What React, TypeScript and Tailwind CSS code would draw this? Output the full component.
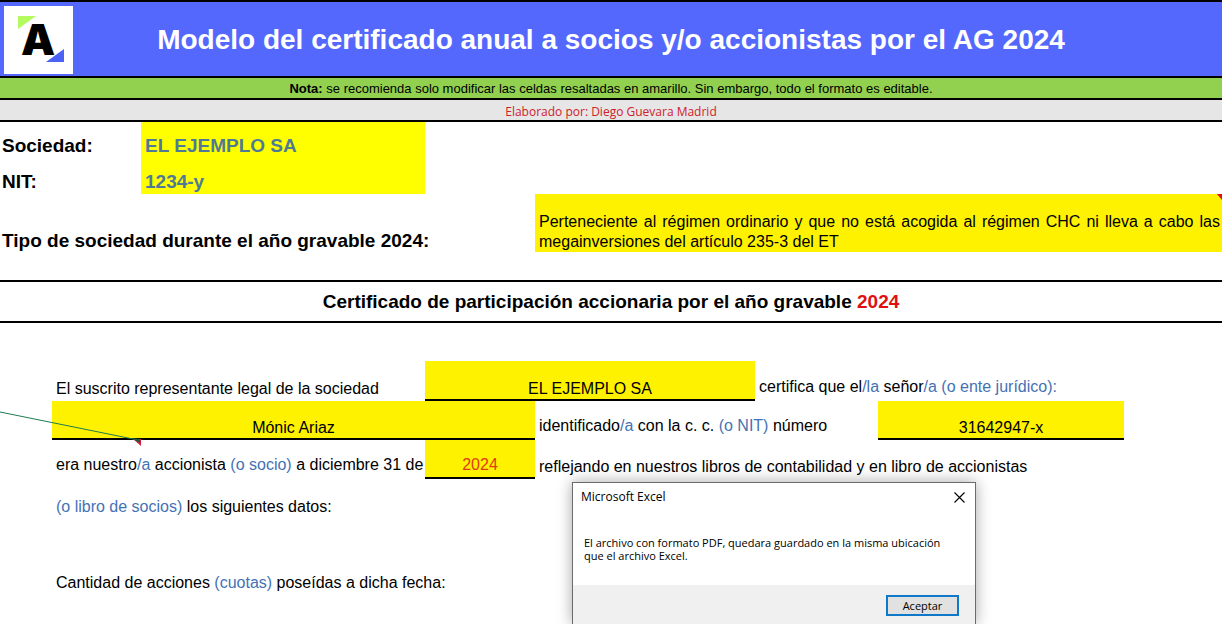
import React from 'react';

interface CellProps {
  className?: string
  children?: React.ReactNode
}

const Alt: React.FC<CellProps> = ({ children }) => (
  <span className="text-[#4472b4]">{children}</span>
);

const Filled: React.FC<CellProps> = ({ className = '', children }) => (
  <div
    className={`flex items-end justify-center bg-[#fff200] border-b-2 border-black ${className}`}
  >
    {children}
  </div>
);

const Logo: React.FC = () => (
  <svg width="69" height="68" viewBox="0 0 69 68" role="img" aria-label="Logo" className="shrink-0 bg-white">
    <path d="M14 10h18L14 23z" fill="#b4fb60" />
    <path d="M60 43v13H42z" fill="#4a63f5" />
    <text
      x="34"
      y="49"
      textAnchor="middle"
      className="font-['Inter',sans-serif] text-[43px] font-black"
      fill="#000"
    >
      A
    </text>
  </svg>
);

const Header: React.FC = () => (
  <header>
    <div className="relative flex items-center h-[78px] px-1 bg-[#5468fd] border-y-2 border-black">
      <div className="absolute left-1 top-1">
        <Logo />
      </div>
      <h1 className="flex-1 pt-0.5 text-center text-[28px] leading-8 font-bold text-white">
        Modelo del certificado anual a socios y/o accionistas por el AG 2024
      </h1>
    </div>
    <p className="h-[22px] pt-px text-center text-[13px] leading-5 bg-[#92d050] border-b-2 border-black">
      <b>Nota:</b> se recomienda solo modificar las celdas resaltadas en amarillo. Sin embargo, todo
      el formato es editable.
    </p>
    <p className="h-[22px] pt-0.5 text-center font-['Open_Sans',sans-serif] text-[12px] leading-5 text-[#d0202a] bg-[#e7e6e6] border-b-2 border-black">
      Elaborado por: Diego Guevara Madrid
    </p>
  </header>
);

const Company: React.FC = () => (
  <section>
    <dl className="grid grid-cols-[141px_284px] text-[19px] leading-6 font-bold">
      <dt className="pl-0.5 py-3">Sociedad:</dt>
      <dd className="pl-1 py-3 bg-[#ffff00] text-[#4f7a96]">EL EJEMPLO SA</dd>
      <dt className="pl-0.5">NIT:</dt>
      <dd className="pl-1 bg-[#ffff00] text-[#4f7a96]">1234-y</dd>
    </dl>
    <div className="grid grid-cols-[535px_1fr] h-[58px]">
      <h2 className="self-end pl-0.5 text-[19px] leading-[22px] font-bold">
        Tipo de sociedad durante el año gravable 2024:
      </h2>
      <div className="relative flex items-end bg-[#fff200] pl-1 pr-0.5 text-[16px] leading-5">
        <p className="text-justify">
          Perteneciente al régimen ordinario y que no está acogida al régimen CHC ni lleva a cabo las
          megainversiones del artículo 235-3 del ET
        </p>
        <svg className="absolute right-0 top-0" width="5" height="6" viewBox="0 0 5 6" aria-hidden="true">
          <path d="M0 0h5v6z" fill="#e01010" />
        </svg>
      </div>
    </div>
  </section>
);

const Certificate: React.FC = () => (
  <section className="relative grid grid-cols-[52px_373px_110px_220px_123px_246px_1fr] grid-rows-[40px_39px_39px] mt-[38px] text-[16px] leading-5">
    <p className="col-start-2 self-end pl-1 pb-0.5">
      El suscrito representante legal de la sociedad
    </p>
    <Filled className="col-span-2">EL EJEMPLO SA</Filled>
    <p className="col-span-3 self-end pl-1 pb-1">
      certifica que el<Alt>/la</Alt> señor<Alt>/a (o ente jurídico):</Alt>
    </p>

    <Filled className="col-start-2 col-span-2">Mónic Ariaz</Filled>
    <p className="col-span-2 self-end pl-1 pb-1">
      identificado<Alt>/a</Alt> con la c. c. <Alt>(o NIT)</Alt> número
    </p>
    <Filled>31642947-x</Filled>

    <p className="col-start-2 self-end pl-1 pb-1 whitespace-nowrap">
      era nuestro<Alt>/a</Alt> accionista <Alt>(o socio)</Alt> a diciembre 31 de
    </p>
    <Filled className="pb-0.5 text-[#e03c10]">2024</Filled>
    <p className="col-span-4 self-end pl-1 pb-0.5">
      reflejando en nuestros libros de contabilidad y en libro de accionistas
    </p>

    <p className="col-start-2 col-span-5 pl-1 pt-[18px]">
      <Alt>(o libro de socios)</Alt> los siguientes datos:
    </p>
    <p className="col-start-2 col-span-5 pl-1 pt-14">
      Cantidad de acciones <Alt>(cuotas)</Alt> poseídas a dicha fecha:
    </p>

    {/* comment connector and its corner mark */}
    <svg className="absolute left-0 top-[50px]" width="142" height="36" viewBox="0 0 142 36" aria-hidden="true">
      <path d="M0 1L138 29" stroke="#1f7a50" strokeWidth="1" fill="none" />
      <path d="M133 28h8v7z" fill="#d01f3c" />
      <path d="M131 27l9 1v4z" fill="#1c5b40" />
    </svg>
  </section>
);

const MessageBox: React.FC = () => (
  <div
    role="dialog"
    aria-label="Microsoft Excel"
    className="absolute left-[572px] bottom-0 w-[404px] bg-white border border-b-0 border-[#6b6b6b] shadow-[0_0_14px_rgba(0,0,0,0.35)] font-['Open_Sans',sans-serif] text-[11px]"
  >
    <div className="flex items-center justify-between h-7 px-2">
      <span className="text-[12px] leading-4">Microsoft Excel</span>
      <button type="button" aria-label="Cerrar" className="p-0.5">
        <svg width="11" height="11" viewBox="0 0 11 11" aria-hidden="true">
          <path d="M0.5 0.5l10 10M10.5 0.5l-10 10" stroke="#000" strokeWidth="1.1" />
        </svg>
      </button>
    </div>
    <p className="h-[74px] pl-[11px] pr-6 pt-[25px] leading-[13px]">
      El archivo con formato PDF, quedara guardado en la misma ubicación que el archivo Excel.
    </p>
    <div className="flex justify-end bg-[#f0f0f0] pt-2.5 pb-2 pr-4">
      <button
        type="button"
        className="w-[73px] h-[21px] leading-4 bg-[#e1e1e1] border-2 border-[#0f78c8]"
      >
        Aceptar
      </button>
    </div>
  </div>
);

export default function App() {
  return (
    <main className="relative min-h-screen overflow-hidden bg-white text-black font-['Liberation_Sans',Arial,sans-serif]">
      <Header />
      <Company />
      <h2 className="mt-7 border-y-2 border-black py-2 text-center text-[19px] leading-[23px] font-bold">
        Certificado de participación accionaria por el año gravable{' '}
        <span className="text-[#e01010]">2024</span>
      </h2>
      <Certificate />
      <MessageBox />
    </main>
  );
}
